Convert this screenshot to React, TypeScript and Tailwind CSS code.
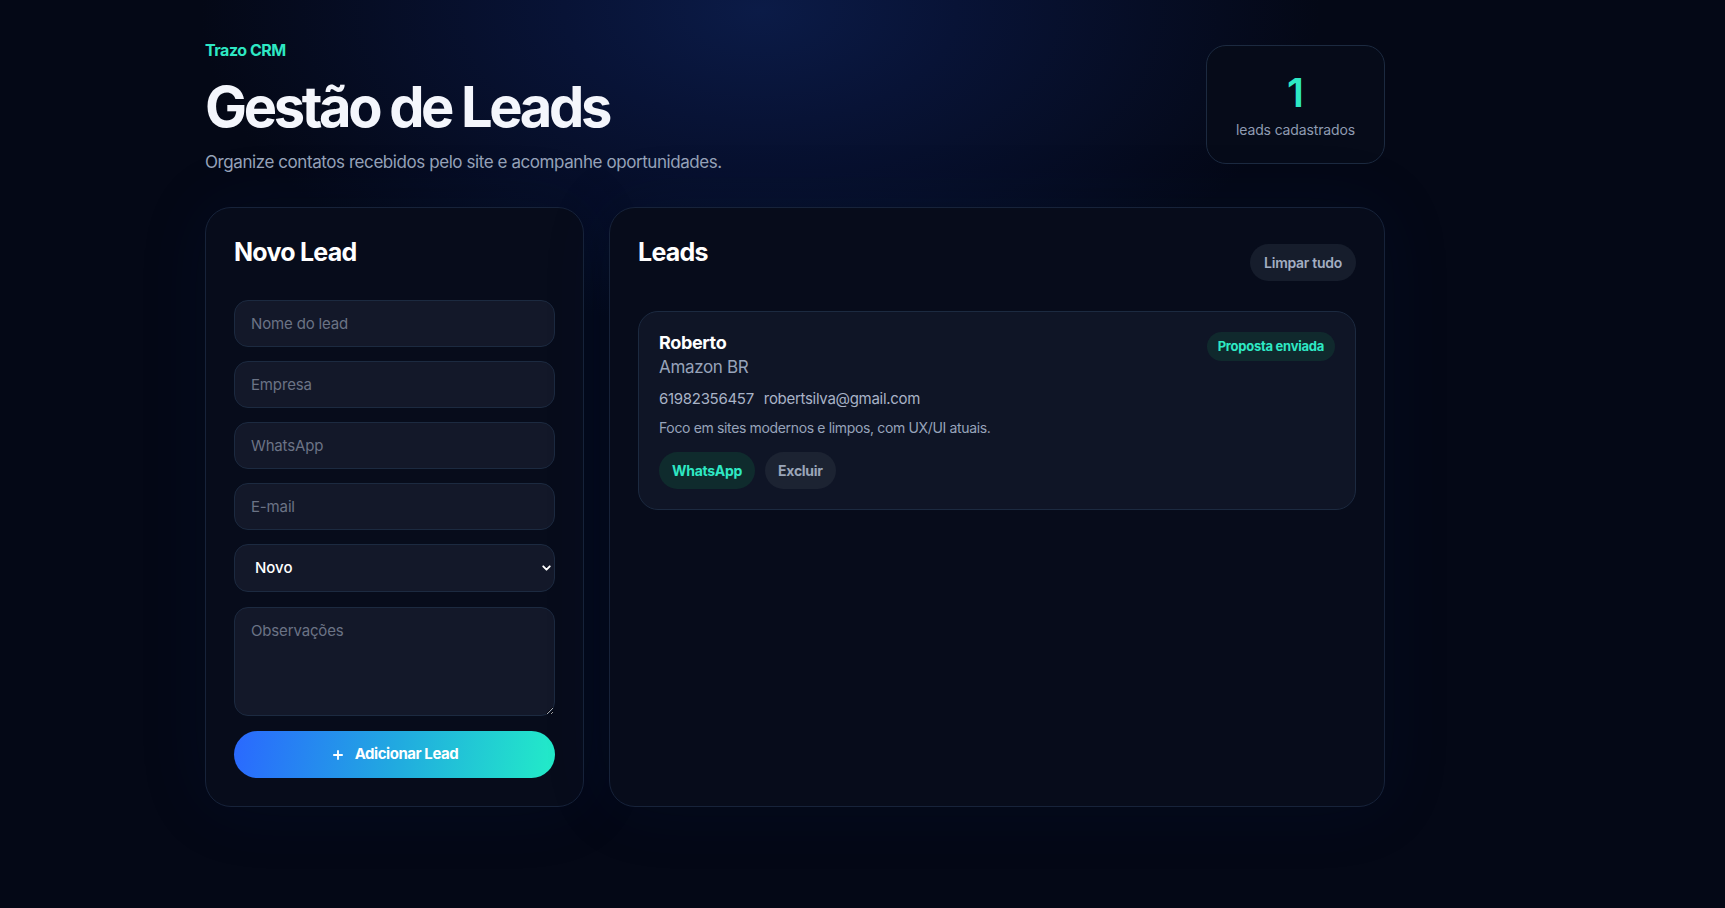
import { Plus, ChevronDown } from "lucide-react";

const lead = {
  name: "Roberto",
  company: "Amazon BR",
  phone: "61982356457",
  email: "robertsilva@gmail.com",
  notes: "Foco em sites modernos e limpos, com UX/UI atuais.",
  status: "Proposta enviada",
};

const inputClass =
  "h-[47px] w-full rounded-[14px] border border-[#1c2a40] bg-[#131829] px-4 text-[15px] tracking-[-0.01em] text-white placeholder:text-[#6b7385] outline-none";

export default function App() {
  return (
    <div
      className="min-h-[908px] w-full bg-[#040816] bg-[radial-gradient(ellipse_560px_320px_at_760px_10px,#0b1b47_0%,#081336_35%,rgba(4,8,22,0)_100%)] text-white"
      style={{ fontFamily: "Inter, 'Noto Sans', sans-serif" }}
    >
      <div className="ml-[205px] w-[1180px] pt-[40px] pb-[60px]">
        {/* Header */}
        <div className="flex items-start justify-between">
          <div>
            <p className="text-[16px] leading-[20px] font-bold tracking-[-0.03em] text-[#2ee8c4]">
              Trazo CRM
            </p>
            <h1 className="mt-[19px] text-[56px] leading-none font-bold tracking-[-0.06em] text-[#f4f6fc]">
              Gestão de Leads
            </h1>
            <p className="mt-[15px] text-[17px] leading-[24px] tracking-[-0.025em] text-[#97a3ba]">
              Organize contatos recebidos pelo site e acompanhe oportunidades.
            </p>
          </div>
          <div className="mt-[5px] flex h-[119px] w-[179px] flex-col items-center justify-center rounded-[20px] border border-[#1c2a40] bg-[#060b19]">
            <span className="mt-[2px] text-[40px] leading-[44px] font-semibold text-[#2ee8c4]">1</span>
            <span className="mt-[5px] text-[14px] leading-[20px] tracking-[-0.01em] text-[#8f9bb2]">
              leads cadastrados
            </span>
          </div>
        </div>

        {/* Main grid */}
        <div className="mt-[33px] grid grid-cols-[379px_1fr] gap-[25px]">
          {/* Form card */}
          <div className="rounded-[26px] border border-[#17233a] bg-[#070c1b] p-[28px] shadow-[0_0_70px_rgba(20,40,100,0.12)]">
            <h2 className="pt-[2px] text-[25px] leading-[29px] font-bold tracking-[-0.03em]">Novo Lead</h2>
            <div className="mt-[33px] flex flex-col gap-[14px]">
              <input className={inputClass} placeholder="Nome do lead" />
              <input className={inputClass} placeholder="Empresa" />
              <input className={inputClass} placeholder="WhatsApp" />
              <input className={inputClass} placeholder="E-mail" />
              <div className="relative mb-[1px]">
                <select className="h-[48px] w-full appearance-none rounded-[14px] border border-[#1c2a40] bg-[#131829] pl-[20px] text-[15px] font-medium text-white outline-none">
                  <option>Novo</option>
                  <option>Em contato</option>
                  <option>Proposta enviada</option>
                  <option>Fechado</option>
                </select>
                <ChevronDown
                  size={13}
                  strokeWidth={3.5}
                  className="pointer-events-none absolute top-1/2 right-[2px] -translate-y-1/2 text-white"
                />
              </div>
              <textarea
                className="mb-[1px] h-[109px] w-full rounded-[14px] border border-[#1c2a40] bg-[#131829] px-4 py-[12px] text-[15px] tracking-[-0.01em] text-white placeholder:text-[#6b7385] outline-none"
                placeholder="Observações"
              />
              <button className="flex h-[47px] w-full items-center justify-center gap-[10px] rounded-full bg-[linear-gradient(100deg,#2a68ff_0%,#21a9e0_50%,#22ecc8_100%)] text-[15px] font-bold tracking-[-0.03em] text-white">
                <Plus size={14} strokeWidth={3.2} />
                Adicionar Lead
              </button>
            </div>
          </div>

          {/* Leads card */}
          <div className="rounded-[26px] border border-[#17233a] bg-[#070c1b] p-[28px] shadow-[0_0_70px_rgba(20,40,100,0.12)]">
            <div className="flex items-start justify-between">
              <h2 className="pt-[2px] text-[25px] leading-[29px] font-bold tracking-[-0.03em]">Leads</h2>
              <button className="mt-[8px] h-[37px] rounded-full bg-[#161d2c] px-[14px] text-[14px] font-semibold tracking-[-0.02em] text-[#a3aec2]">
                Limpar tudo
              </button>
            </div>

            <div className="mt-[30px] rounded-[20px] border border-[#1c2a40] bg-[#0f1526] p-[20px]">
              <div className="flex items-start justify-between">
                <div>
                  <p className="text-[18px] leading-[22px] font-bold tracking-[-0.02em] text-white">{lead.name}</p>
                  <p className="mt-[1px] text-[17px] leading-[24px] tracking-[-0.02em] text-[#97a3ba]">{lead.company}</p>
                </div>
                <span className="flex h-[29px] items-center rounded-full bg-[#10292d] px-[11px] text-[13px] font-bold tracking-[-0.02em] text-[#2ee8c4]">
                  {lead.status}
                </span>
              </div>
              <div className="mt-[9px] flex gap-[10px] text-[15px] leading-[22px] tracking-[-0.02em] text-[#a9b3c6]">
                <span>{lead.phone}</span>
                <span>{lead.email}</span>
              </div>
              <p className="mt-[8px] text-[14px] leading-[20px] tracking-[-0.025em] text-[#97a3ba]">{lead.notes}</p>
              <div className="mt-[14px] flex gap-[10px]">
                <button className="h-[37px] rounded-full bg-[#0f2b2d] px-[13px] text-[14px] font-bold tracking-[-0.02em] text-[#2ee8c4]">
                  WhatsApp
                </button>
                <button className="h-[37px] rounded-full bg-[#1c2332] px-[13px] text-[14px] font-bold tracking-[-0.02em] text-[#9aa5b8]">
                  Excluir
                </button>
              </div>
            </div>
          </div>
        </div>
      </div>
    </div>
  );
}
